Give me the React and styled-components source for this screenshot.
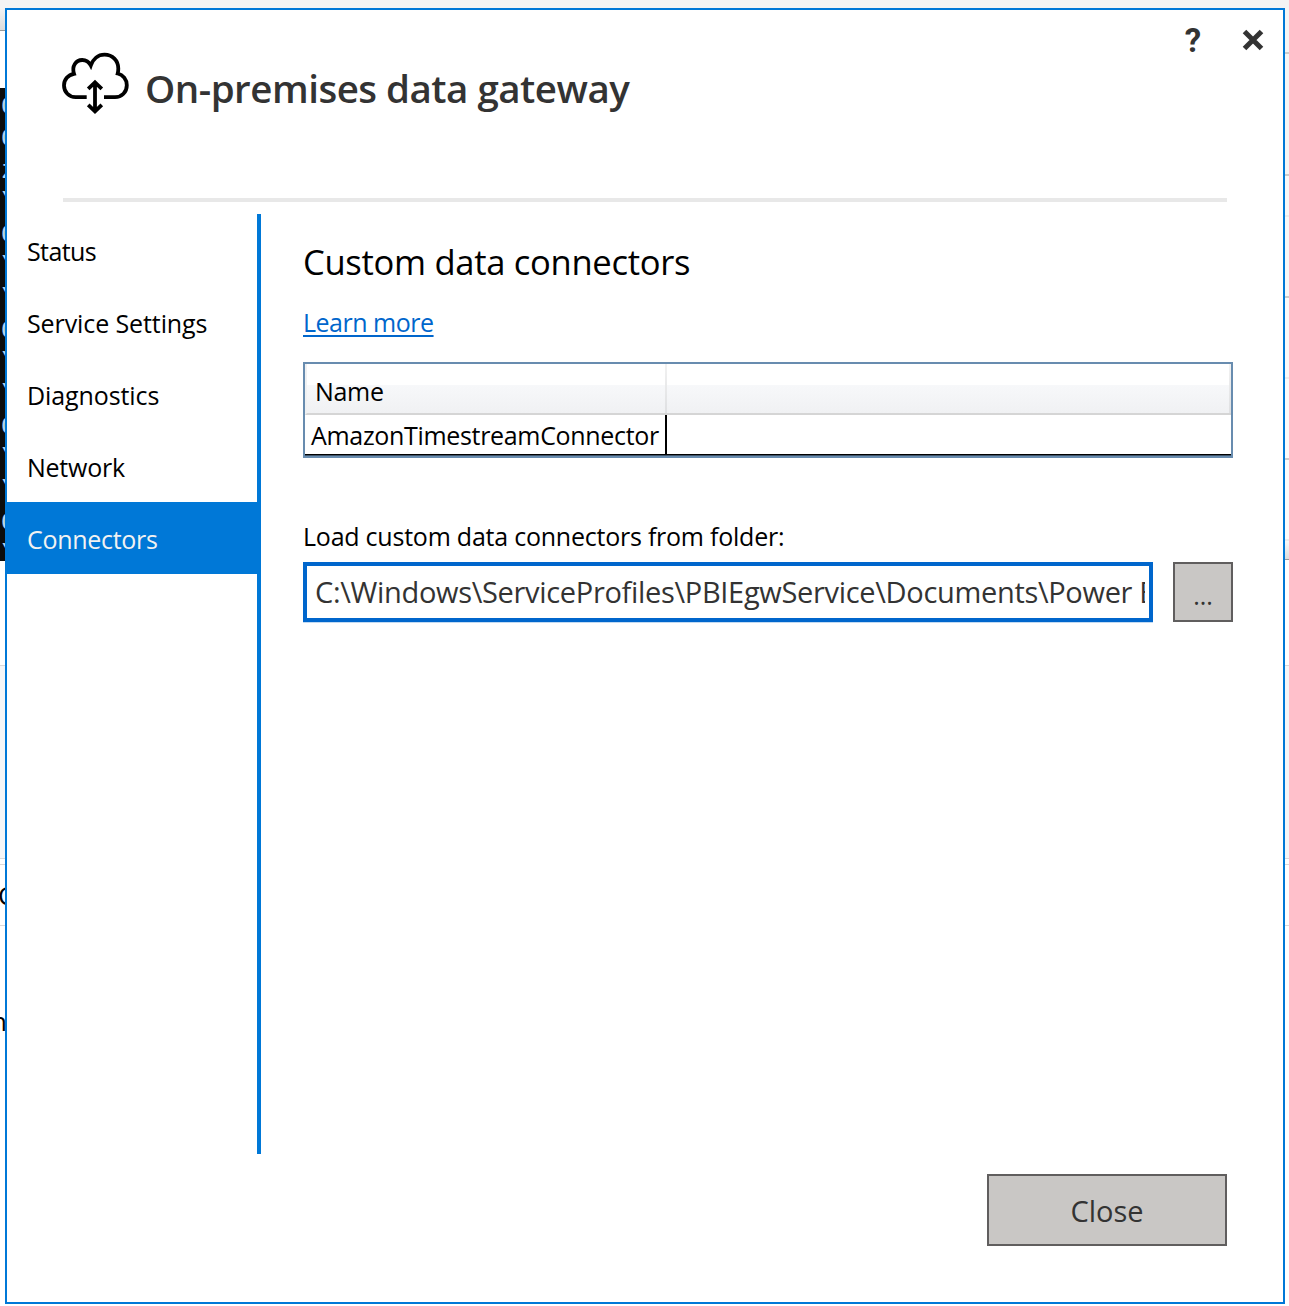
import React from "react";
import styled, { createGlobalStyle, css } from "styled-components";

const Global = createGlobalStyle`
  *, *::before, *::after { box-sizing: border-box; }
  body { margin: 0; overflow: hidden; background: #fff; }
`;

const Desktop = styled.div`
  display: grid;
  grid-template-columns: 5px 1280px 4px;
  height: 1306px;
  overflow: hidden;
  padding-top: 8px;
  background: linear-gradient(#f4f4f4 0 8px, #fff 8px);
  font-family: "Open Sans", "Noto Sans", sans-serif;
  color: #000;
`;
const Strip = styled.div`
  display: flex;
  flex-direction: column;
  overflow: hidden;
`;
const Band = styled.div`
  flex: none;
  height: ${(p) => p.$h}px;
  background: ${(p) => p.$bg || "#fff"};
  ${(p) => p.$line && css`border-bottom: ${p.$lw || 1}px solid ${p.$line};`}
  overflow: hidden;
`;
const Terminal = styled(Band)`
  padding: 3px 0 0 1px;
  font: 26px/32px "Liberation Mono", monospace;
  color: #b5d3ee;
`;
const TerminalRow = styled.div`
  height: 32px;
`;
const Peek = styled.div`
  font-size: 26px;
  line-height: 60px;
  margin-left: ${(p) => p.$x}px;
`;

const Dialog = styled.main`
  display: flex;
  flex-direction: column;
  height: 1296px;
  background: #fff;
  border: 2px solid #0078d7;
`;
const Header = styled.header`
  display: flex;
  height: 188px;
  margin: 0 0 0 56px;
  padding-top: 40px;
`;
const CloudLogo = styled.svg`
  flex: none;
  width: 68px;
  height: 66px;
  overflow: visible;
`;
const Title = styled.h1`
  flex: 1;
  margin: 8px 0 0 14px;
  font-size: 38.5px;
  line-height: 60px;
  font-weight: 600;
  letter-spacing: -0.5px;
  color: #333;
  white-space: nowrap;
`;
const WindowActions = styled.div`
  display: flex;
  gap: 36px;
  margin: -22px 18px 0 0;
`;
const IconButton = styled.button`
  display: grid;
  place-items: center;
  width: 24px;
  height: 24px;
  padding: ${(p) => p.$pt || 0}px 0 0;
  border: 0;
  background: none;
  color: #333;
  font: 700 33px/24px Roboto, sans-serif;
`;
const Divider = styled.hr`
  width: 1164px;
  height: 4px;
  margin: 0 0 12px 56px;
  border: 0;
  background: #e8e8e8;
`;
const Body = styled.div`
  display: flex;
  height: 940px;
`;
const Nav = styled.nav`
  width: 254px;
  border-right: 4px solid #0078d7;
`;
const NavItem = styled.a`
  display: block;
  height: 72px;
  padding: 1px 0 0 20px;
  font-size: 25px;
  line-height: 72px;
  letter-spacing: ${(p) => p.$ls}px;
  white-space: nowrap;
  color: ${(p) => (p.$active ? "#f2f2f2" : "#000")};
  background: ${(p) => (p.$active ? "#0078d7" : "transparent")};
`;
const Panel = styled.section`
  width: 930px;
  margin-left: 42px;
`;
const Heading = styled.h2`
  margin: 23px 0 0;
  font-size: 34.6px;
  font-weight: 400;
  line-height: 50px;
  letter-spacing: -0.31px;
`;
const Link = styled.a`
  display: block;
  width: max-content;
  margin-top: 17px;
  font-size: 25px;
  line-height: 36px;
  letter-spacing: -0.49px;
  color: #0066cc;
  text-decoration: underline;
  text-decoration-thickness: 2px;
  text-underline-offset: 3px;
`;
const Table = styled.div`
  height: 96px;
  margin-top: 22px;
  border: 2px solid #688caf;
  background: #3f5468;
  font-size: 25px;
`;
const HeadRow = styled.div`
  display: grid;
  grid-template-columns: 360px 1fr;
  height: 51px;
  background: linear-gradient(#fff 0 21px, #f7f8fa 21px, #f0f1f3 49px);
  border-left: 2px solid #f0f1f2;
  border-bottom: 2px solid #d5d5d5;
`;
const HeadCell = styled.div`
  height: 49px;
  padding-left: 8px;
  line-height: 55px;
  letter-spacing: -0.3px;
  border-right: 2px solid;
  border-image: linear-gradient(#f2f2f2, #dedfe1) 1;
`;
const DataRow = styled.div`
  display: grid;
  grid-template-columns: 362px 1fr;
  height: 40px;
  background: #fff;
  border-bottom: 1px solid #000;
`;
const DataCell = styled.div`
  height: 39px;
  padding-left: 6px;
  line-height: 41px;
  letter-spacing: -0.32px;
  white-space: nowrap;
  border-right: ${(p) => (p.$last ? 0 : 2)}px solid #000;
`;
const Label = styled.label`
  display: block;
  margin-top: 58px;
  font-size: 25px;
  line-height: 40px;
  letter-spacing: -0.23px;
`;
const FolderRow = styled.div`
  display: flex;
  justify-content: space-between;
  margin-top: 6px;
`;
const PathField = styled.div`
  width: 850px;
  height: 60px;
  padding: 0 4px 0 8px;
  border: 4px solid #0066cc;
  box-shadow: 0 1px #c2daf2;
`;
const PathText = styled.div`
  overflow: hidden;
  white-space: nowrap;
  font-size: 29px;
  line-height: 52px;
  letter-spacing: -0.32px;
  color: #333;
`;
const Button = styled.button`
  width: ${(p) => p.$w}px;
  height: ${(p) => p.$h}px;
  padding: ${(p) => p.$pt || 0}px 0 0;
  border: 2px solid #605e5e;
  background: #c9c7c5;
  color: #333;
  font-family: inherit;
  font-size: ${(p) => p.$fs}px;
`;
const Footer = styled.footer`
  display: flex;
  justify-content: flex-end;
  padding: 20px 56px 0 0;
`;

const navItems = [
  { label: "Status", tracking: -0.6 },
  { label: "Service Settings", tracking: -0.1 },
  { label: "Diagnostics", tracking: -0.1 },
  { label: "Network", tracking: -0.25 },
  { label: "Connectors", tracking: -0.3, active: true },
];
const terminalRows = ["C", "C", "z", "\\", "C", "\\", "\\", "C", "\\", "\\", "C", "\\", "\\", "C", "\\"];

export default function App() {
  return (
    <>
      <Global />
      <Desktop>
        <Strip>
          <Band $h={23} $bg="linear-gradient(#f4f4f4, #dcdcdc)" $line="#999" />
          <Band $h={57} />
          <Terminal $h={473} $bg="#0c0c0c">
            {terminalRows.map((t, i) => <TerminalRow key={i}>{t}</TerminalRow>)}
          </Terminal>
          <Band $h={105} $line="#d8d8da" />
          <Band $h={193} $bg="#f5f6f8" $line="#d8d8da" />
          <Band $h={6} $line="#d8d8da" />
          <Band $h={61} $line="#d8d8da"><Peek $x={-2}>C</Peek></Band>
          <Band $h={65} />
          <Band $h={60}><Peek $x={-9}>n</Peek></Band>
        </Strip>
        <Dialog>
          <Header>
            <CloudLogo viewBox="0 0 68 66" fill="none" stroke="#000" strokeWidth="3.8">
              <path d="M23.700 47.200H12.700C6 47.200 1 42 1 35.500C1 29.500 5 24.800 11 23.800C8.500 16 13 10 19.200 10C23 10 26 12 27.800 15.500C30 9 35 4.600 41.500 4.600C49.500 4.600 55.300 10.500 55.300 18.500C55.300 20.300 55.100 22 54.700 23.500C60 24.800 63.800 29.500 63.800 35.200C63.800 42 58.800 47.200 52 47.200H41" />
              <path d="M32 33V61M25.200 38.800L32 32.400L38.800 38.800M25.200 54.900L32 61.300L38.800 54.900" />
            </CloudLogo>
            <Title>On-premises data gateway</Title>
            <WindowActions>
              <IconButton $pt={1}>?</IconButton>
              <IconButton>
                <svg width="22" height="22" viewBox="-1 -1 22 22" stroke="#333" strokeWidth="5"><path d="M1.500 1.500L18.500 18.500M18.500 1.500L1.500 18.500" /></svg>
              </IconButton>
            </WindowActions>
          </Header>
          <Divider />
          <Body>
            <Nav>
              {navItems.map((n) => <NavItem key={n.label} $ls={n.tracking} $active={n.active}>{n.label}</NavItem>)}
            </Nav>
            <Panel>
              <Heading>Custom data connectors</Heading>
              <Link>Learn more</Link>
              <Table>
                <HeadRow><HeadCell>Name</HeadCell><HeadCell /></HeadRow>
                <DataRow><DataCell>AmazonTimestreamConnector</DataCell><DataCell $last /></DataRow>
              </Table>
              <Label>Load custom data connectors from folder:</Label>
              <FolderRow>
                <PathField><PathText>C:\Windows\ServiceProfiles\PBIEgwService\Documents\Power B</PathText></PathField>
                <Button $w={60} $h={60} $fs={25} $pt={5}>...</Button>
              </FolderRow>
            </Panel>
          </Body>
          <Footer><Button $w={240} $h={72} $fs={29}>Close</Button></Footer>
        </Dialog>
        <Strip>
          <Band $h={46} $bg="#f5f5f5" $line="#ccc" $lw={2} />
          <Band $h={122} $bg="#f5f5f5" $line="#ccc" $lw={2} />
          <Band $h={41} $bg="#f8f8f8" $line="#ececec" $lw={2} />
          <Band $h={81} $bg="#f8f8f8" $line="#ccc" $lw={2} />
          <Band $h={81} $bg="#fafafa" $line="#ececec" $lw={2} />
          <Band $h={81} $bg="#fbfbfb" $line="#ccc" $lw={2} />
          <Band $h={81} $bg="#fcfcfc" $line="#ececec" $lw={2} />
          <Band $h={19} $bg="linear-gradient(#fafafa, #dcdcdc)" $line="#999" />
          <Band $h={106} $line="#d8d8da" />
          <Band $h={193} $bg="#f5f6f8" $line="#d8d8da" />
          <Band $h={6} $line="#d8d8da" />
          <Band $h={61} $line="#d8d8da" />
        </Strip>
      </Desktop>
    </>
  );
}
